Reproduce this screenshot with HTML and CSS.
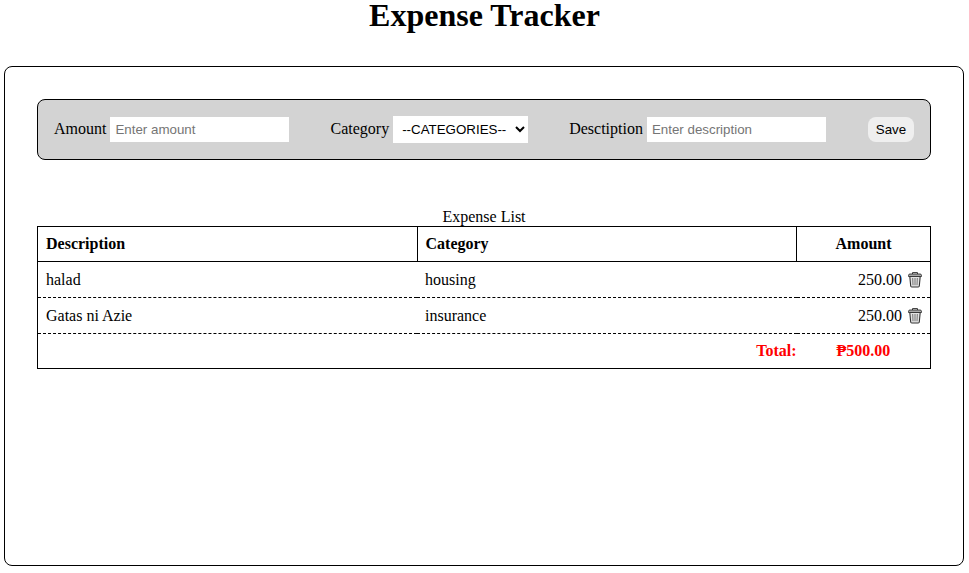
FILE: index.html
```html
<!DOCTYPE html>
<html lang="en">
<head>
<meta charset="UTF-8">
<title>Expense Tracker</title>
<link rel="stylesheet" href="styles.css">
</head>
<body>
<svg class="defs" width="0" height="0" aria-hidden="true">
  <symbol id="trash" viewBox="0 0 14 16">
    <path d="M1.800 4.500 2.700 14Q2.800 15 3.800 15H10.200Q11.200 15 11.300 14L12.200 4.500Z" fill="#e4e4e4" stroke="#333" stroke-width="1.100"/>
    <path d="M4.700 6 5 13.200M7 6V13.200M9.300 6 9 13.200" fill="none" stroke="#666" stroke-width=".9"/>
    <path d="M4.500 2V.6H9.500V2" fill="none" stroke="#333"/>
    <path d="M.5 4.500V3.300Q.7 2 1.900 2H12.100Q13.300 2 13.500 3.300V4.500Z" fill="#aaa" stroke="#333" stroke-width=".9"/>
  </symbol>
</svg>
<h1>Expense Tracker</h1>
<main class="container">
  <form class="expense-form">
    <div><label for="amount">Amount</label> <input id="amount" type="text" placeholder="Enter amount"></div>
    <div><label for="category">Category</label> <select id="category"><option>--CATEGORIES--</option></select></div>
    <div class="description-field"><label for="description">Desctiption</label> <input id="description" type="text" placeholder="Enter description"></div>
    <button type="button">Save</button>
  </form>
  <table>
    <caption>Expense List</caption>
    <thead>
      <tr><th class="wide">Description</th><th class="wide">Category</th><th class="amount-head">Amount</th></tr>
    </thead>
    <tbody>
      <tr><td>halad</td><td>housing</td><td class="amount">250.00 <svg class="trash"><use href="#trash"/></svg></td></tr>
      <tr><td>Gatas ni Azie</td><td>insurance</td><td class="amount">250.00 <svg class="trash"><use href="#trash"/></svg></td></tr>
    </tbody>
    <tfoot>
      <tr><td colspan="2" class="total-label">Total:</td><td class="total">₱500.00</td></tr>
    </tfoot>
  </table>
</main>
</body>
</html>
```
FILE: styles.css
```css
* {
  box-sizing: border-box;
  margin: 0;
  padding: 0;
}

body {
  background: #fff;
  color: #000;
  font: 16px "Liberation Serif", "Times New Roman", serif;
}

.defs {
  position: absolute;
}

h1 {
  height: 34px;
  margin-bottom: 32px;
  font-size: 32px;
  line-height: 30px;
  text-align: center;
}

.container {
  width: 960px;
  height: 500px;
  margin: 0 auto 0 4px;
  padding: 32px;
  border: 1px solid #000;
  border-radius: 8px;
}

.expense-form {
  display: flex;
  justify-content: space-between;
  align-items: center;
  height: 61px;
  margin-bottom: 48px;
  padding: 16px;
  background: lightgray;
  border: 1px solid #000;
  border-radius: 8px;
}

.description-field {
  padding-right: 1px;
}

input,
select,
button {
  border: 0;
  font: 13.333px "Liberation Sans", Arial, sans-serif;
}

input {
  width: 179px;
  height: 25px;
  padding: 5px;
  background: #fff;
}

input::placeholder {
  color: #757575;
}

select {
  width: 135px;
  height: 27px;
  padding: 5px;
  background: #fff;
  color: #000;
}

button {
  width: 46px;
  height: 25px;
  background: #efefef;
  border-radius: 8px;
  color: #000;
}

table {
  width: 100%;
  table-layout: fixed;
  border-collapse: collapse;
  border: 1px solid #000;
}

th,
td {
  padding: 8px;
  line-height: 18px;
  text-align: left;
}

th {
  height: 35px;
  border: 1px solid #000;
}

.wide {
  width: 42.5%;
}

th.amount-head {
  width: 15%;
  text-align: center;
}

tbody td {
  height: 36px;
  border-bottom: 1px dashed #000;
}

td.amount {
  text-align: right;
  white-space: nowrap;
}

.trash {
  width: 14px;
  height: 16px;
  margin: 0 .5px 0 1.5px;
  vertical-align: -3px;
}

tfoot td {
  height: 35px;
  color: red;
  font-weight: bold;
}

td.total-label {
  padding-right: 0;
  text-align: right;
}

td.total {
  text-align: center;
}
```
